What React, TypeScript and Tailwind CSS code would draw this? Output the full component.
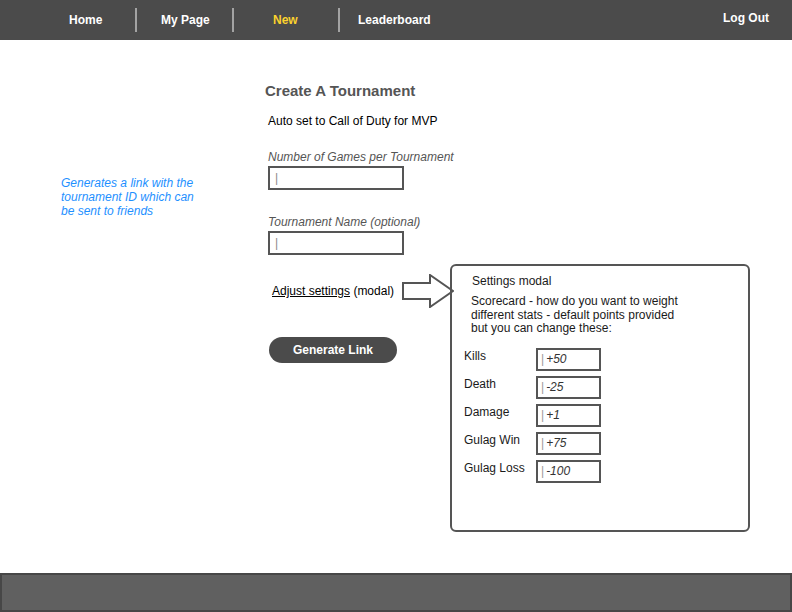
const navFont = { fontFamily: '"Liberation Sans", Arial, sans-serif' };

const scores = [
  { label: "Kills", value: "+50" },
  { label: "Death", value: "-25" },
  { label: "Damage", value: "+1" },
  { label: "Gulag Win", value: "+75" },
  { label: "Gulag Loss", value: "-100" },
];

const Sep = () => <div className="w-[2px] h-6 bg-[#a3a3a3] self-center" />;

const TextBox = ({ value }: { value?: string }) => (
  <div className="w-[136px] h-6 border-2 border-[#555555] flex items-center pl-[5px]">
    <span className="text-[12px] text-[#8a8a8a] leading-none">|</span>
    {value && <span className="ml-1 text-[12px] italic text-[#333]">{value}</span>}
  </div>
);

const App: React.FC = () => {
  return (
    <div className="w-full h-[612px] flex flex-col bg-white" style={navFont}>
      {/* barra superior */}
      <header className="h-10 bg-[#4b4b4b] flex items-stretch text-white text-[12px] font-bold">
        <div className="w-[135px] pl-[69px] flex items-center">Home</div>
        <Sep />
        <div className="w-[95px] pl-[24px] flex items-center">My Page</div>
        <Sep />
        <div className="w-[104px] pl-[39px] flex items-center text-[#fcd22e]">New</div>
        <Sep />
        <div className="pl-[18px] flex items-center">Leaderboard</div>
        <div className="ml-auto pr-[23px] pt-[9px]">Log Out</div>
      </header>

      <main className="flex-1 flex">
        {/* nota lateral */}
        <div className="w-[265px] pl-[61px] pt-[136px]">
          <p className="text-[12px] leading-[14px] italic text-[#1e90ff]">
            Generates a link with the
            <br />
            tournament ID which can
            <br />
            be sent to friends
          </p>
        </div>

        {/* formulario */}
        <div className="w-[185px] pt-[42px] flex flex-col">
          <h2 className="text-[15px] leading-[18px] font-bold text-[#555555]">Create A Tournament</h2>
          <div className="pl-[3px] flex flex-col">
            <p className="mt-[14px] text-[12px] leading-[14px] text-black">Auto set to Call of Duty for MVP</p>
            <label className="mt-[22px] text-[12px] leading-[14px] italic text-[#555555] whitespace-nowrap">
              Number of Games per Tournament
            </label>
            <div className="mt-[2px]">
              <TextBox />
            </div>
            <label className="mt-[25px] text-[12px] leading-[14px] italic text-[#555555]">
              Tournament Name (optional)
            </label>
            <div className="mt-[2px]">
              <TextBox />
            </div>
            <div className="mt-[19px] flex items-center h-[34px] whitespace-nowrap">
              <span className="ml-[4px] text-[12px] text-black">
                <span className="underline">Adjust settings</span> (modal)
              </span>
              <svg width="52" height="34" viewBox="0 0 52 34" className="ml-[8px] shrink-0">
                <polygon
                  points="1,9 28,9 28,1 51,17 28,33 28,25 1,25"
                  fill="white"
                  stroke="#555555"
                  strokeWidth="2"
                  strokeLinejoin="miter"
                />
              </svg>
            </div>
            <button className="mt-[29px] ml-[1px] w-[128px] h-[26px] rounded-full bg-[#4b4b4b] text-white text-[12px] font-bold">
              Generate Link
            </button>
          </div>
        </div>

        {/* modal de ajustes */}
        <div className="pt-[224px]">
          <div className="w-[300px] h-[268px] border-2 border-[#555555] rounded-md pt-[8px] text-[12px] text-[#1a1a1a]">
            <p className="pl-[20px] leading-[14px]">Settings modal</p>
            <p className="pl-[19px] mt-[7px] leading-[13.5px]">
              Scorecard - how do you want to weight
              <br />
              different stats - default points provided
              <br />
              but you can change these:
            </p>
            <div className="mt-[12px] pl-[12px] flex flex-col gap-[5px]">
              {scores.map((s) => (
                <div key={s.label} className="flex items-start">
                  <span className="w-[72px] mt-[1px] leading-[14px]">{s.label}</span>
                  <div className="w-[65px] h-[23px] border-2 border-[#555555] flex items-center pl-[3px]">
                    <span className="text-[#9a9a9a] leading-none">|</span>
                    <span className="ml-[2px] italic text-[#333]">{s.value}</span>
                  </div>
                </div>
              ))}
            </div>
          </div>
        </div>
      </main>

      <footer className="h-[39px] bg-[#606060] border-2 border-[#474747]" />
    </div>
  );
};

export default App;
